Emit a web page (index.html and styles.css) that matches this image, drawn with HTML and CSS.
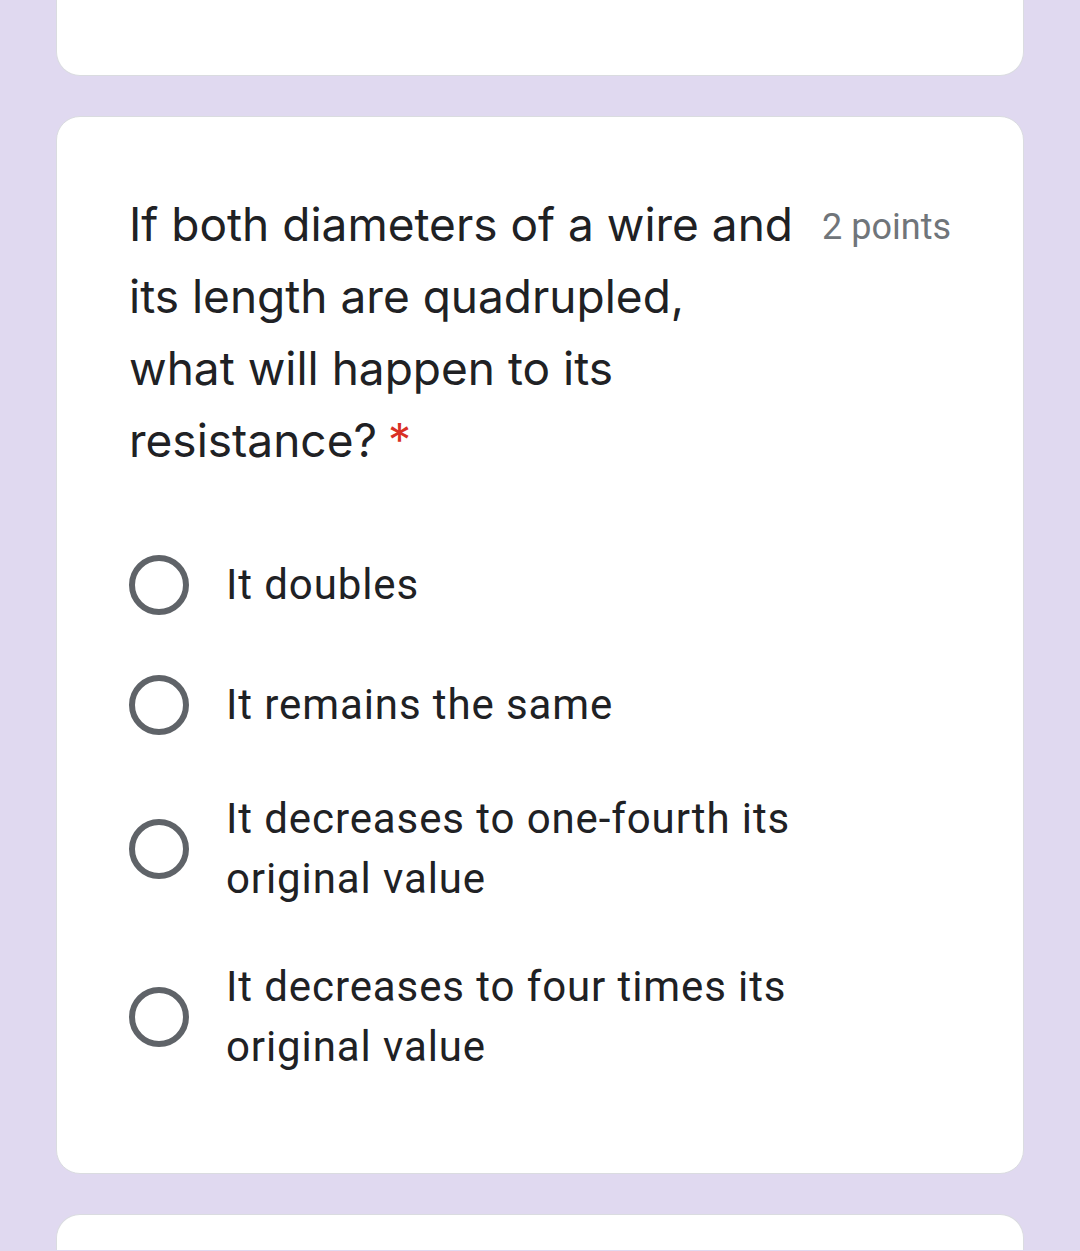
FILE: index.html
```html
<!DOCTYPE html>
<html lang="en">
<head>
    <meta charset="UTF-8">
    <meta name="viewport" content="width=device-width, initial-scale=1.0">
    <title>Quiz</title>
    <link rel="stylesheet" href="styles.css">
</head>
<body>
    <div class="card card-top"></div>

    <div class="card question">
        <div class="question-head">
            <div class="question-title"><span class="title-text">If both diameters of a wire and its length are quadrupled, what will happen to its resistance?</span><span class="required">*</span></div>
            <div class="points">2 points</div>
        </div>

        <div class="options">
            <label class="option">
                <span class="radio"></span>
                <span class="option-text">It doubles</span>
            </label>
            <label class="option">
                <span class="radio"></span>
                <span class="option-text">It remains the same</span>
            </label>
            <label class="option">
                <span class="radio"></span>
                <span class="option-text">It decreases to one-fourth its original value</span>
            </label>
            <label class="option">
                <span class="radio"></span>
                <span class="option-text">It decreases to four times its original value</span>
            </label>
        </div>
    </div>

    <div class="card card-next"></div>
</body>
</html>
```

FILE: styles.css
```css
html, body {
    height: 100%;
}

body {
    margin: 0;
    padding: 0 56px;
    background-color: #e0d9f0;
    font-family: Roboto, "Noto Sans", sans-serif;
    color: #202124;
    overflow: hidden;
}

.card {
    background: #fff;
    border: 1px solid #dadce0;
    border-radius: 24px;
    margin-bottom: 40px;
}

.card-top {
    height: 75px;
    border-top: none;
    border-top-left-radius: 0;
    border-top-right-radius: 0;
}

/* next question, cut off by the screen */
.card-next {
    height: 35px;
    margin-bottom: 0;
    border-bottom: none;
    border-bottom-left-radius: 0;
    border-bottom-right-radius: 0;
}

.question {
    padding: 71px 72px 96px;
}

.question-head {
    display: flex;
    align-items: flex-start;
    gap: 26px;
}

.question-title {
    flex: 1;
    max-width: 668px;
    font-family: Inter, "Open Sans", sans-serif;
    font-size: 46px;
    line-height: 72px;
    letter-spacing: 0;
}

.required {
    display: inline-block;
    color: #d93025;
    margin-left: 11px;
}

.points {
    flex-shrink: 0;
    margin-left: auto;
    font-size: 36px;
    line-height: 72px;
    color: #70757a;
    padding-top: 3px;
}

.options {
    display: flex;
    flex-direction: column;
    gap: 48px;
    margin-top: 73px;
}

.option {
    display: flex;
    align-items: center;
    min-height: 72px;
}

.radio {
    flex-shrink: 0;
    width: 48px;
    height: 48px;
    border: 6px solid #5f6368;
    border-radius: 50%;
    margin-right: 37px;
}

.option-text {
    max-width: 660px;
    font-size: 42px;
    line-height: 60px;
    letter-spacing: 0.9px;
}
```
